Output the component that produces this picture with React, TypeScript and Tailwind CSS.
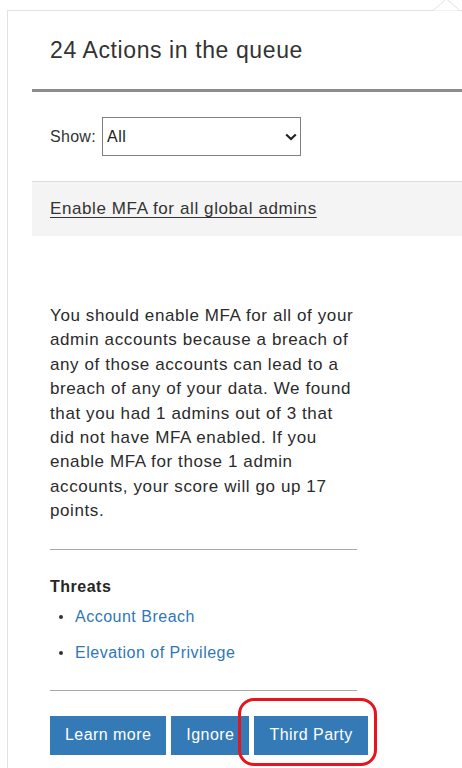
import React from "react";

export default function App() {
  return (
    <div
      className="relative w-[462px] h-[768px] overflow-hidden bg-white text-[#2b2b2b] tracking-[0.5px]"
      style={{ fontFamily: '"Liberation Sans", Arial, sans-serif' }}
    >
      <div className="ml-[7px] mt-[10px] min-h-[758px] border-l border-t border-[#e2e2e2] pl-[24px]">
        <h1 className="mt-[24px] pl-[18px] text-[23px] leading-[30px] tracking-[0.6px] text-[#333] font-normal">
          24 Actions in the queue
        </h1>
        <div className="mt-[24px] h-[3px] bg-[#8c8c8c]" />

        <div className="mt-[25px] pl-[18px] flex items-center h-[39px]">
          <span className="text-[16px] tracking-[0.3px] text-[#333]">Show:</span>
          <div className="ml-[6px] w-[199px] h-[39px] border border-[#7f7f7f] flex items-center justify-between pl-[4px] pr-[3px]">
            <span className="text-[16px] text-[#222]">All</span>
            <svg width="12" height="8" viewBox="0 0 12 8" className="mt-[1px]">
              <polyline points="1.2,1.5 6,6 10.8,1.5" fill="none" stroke="#222" strokeWidth="2.2" />
            </svg>
          </div>
        </div>

        <div className="mt-[25px] h-[55px] bg-[#f4f4f4] border-t border-[#dcdcdc] flex items-center pl-[18px]">
          <span className="text-[17px] tracking-[0.6px] text-[#333] underline underline-offset-[3px] decoration-[1px]">
            Enable MFA for all global admins
          </span>
        </div>

        <div className="pl-[18px]">
          <p className="mt-[68px] w-[309px] text-[17px] leading-[24.4px] tracking-[0.6px]">
            You should enable MFA for all of your admin accounts because a breach of any of those accounts can lead to a breach of any of your data. We found that you had 1 admins out of 3 that did not have MFA enabled. If you enable MFA for those 1 admin accounts, your score will go up 17 points.
          </p>

          <div className="mt-[25px] w-[307px] h-px bg-[#a8a8a8]" />

          <div className="mt-[25px] text-[16px] leading-[24px] font-bold text-[#262626]">Threats</div>
          <ul className="text-[16px] leading-[36px]">
            <li className="flex items-center">
              <span className="ml-[9px] w-[4px] h-[4px] rounded-full bg-[#333]" />
              <span className="ml-[12px] text-[#2f77b8]">Account Breach</span>
            </li>
            <li className="flex items-center">
              <span className="ml-[9px] w-[4px] h-[4px] rounded-full bg-[#333]" />
              <span className="ml-[12px] text-[#2f77b8]">Elevation of Privilege</span>
            </li>
          </ul>

          <div className="mt-[19px] w-[307px] h-px bg-[#a8a8a8]" />

          <div className="mt-[25px] flex gap-[5px]">
            <button className="h-[39px] px-[15px] bg-[#337ab7] text-white text-[16px] tracking-[0.45px]">
              Learn more
            </button>
            <button className="h-[39px] px-[15px] bg-[#337ab7] text-white text-[16px] tracking-[0.45px]">
              Ignore
            </button>
            <button className="h-[39px] px-[15px] bg-[#337ab7] text-white text-[16px] tracking-[0.45px]">
              Third Party
            </button>
          </div>
        </div>
      </div>

      {/* callout arrow at top right */}
      <svg className="absolute top-0 right-0" width="40" height="14" viewBox="0 0 40 14">
        <polygon points="11,10.5 24.5,-1 38,10.5" fill="#ffffff" />
        <polyline points="11,10.5 24.5,-1 38,10.5" fill="none" stroke="#e2e2e2" strokeWidth="1" />
      </svg>

      {/* red annotation */}
      <div className="absolute left-[238px] top-[698px] w-[139px] h-[68px] rounded-[16px] border-[3.5px] border-[#e8131c]" />
    </div>
  );
}
